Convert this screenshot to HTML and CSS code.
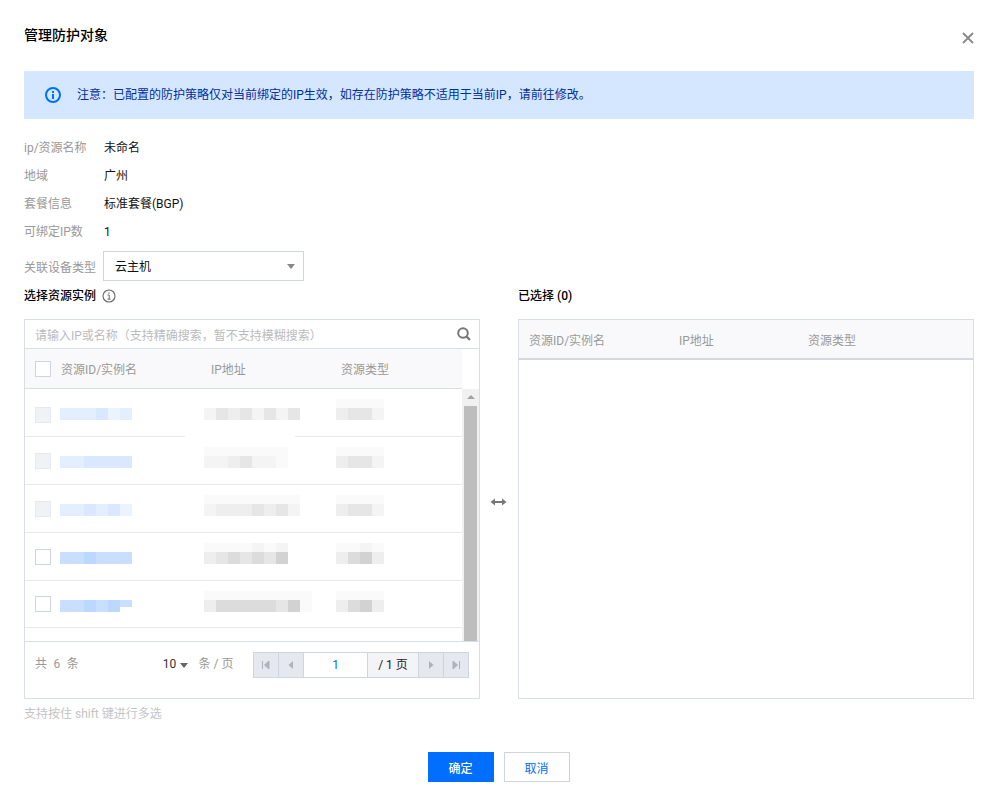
FILE: index.html
```html
<!DOCTYPE html>
<html lang="zh-CN">
<head>
<meta charset="utf-8">
<title>管理防护对象</title>
<link rel="stylesheet" href="styles.css">
</head>
<body>
<div class="dialog">
  <header class="head">
    <h1 class="title">管理防护对象</h1>
    <svg class="close" width="12" height="12" viewBox="0 0 12 12"><path d="M1 1l10 10M11 1L1 11" stroke="#888" stroke-width="1.8" fill="none"/></svg>
  </header>
  <div class="alert">
    <svg class="alert-icon" width="16" height="16" viewBox="0 0 16 16"><circle cx="8" cy="8" r="7" fill="none" stroke="#006eff" stroke-width="2"/><rect x="7" y="7" width="2" height="5" fill="#006eff"/><rect x="7" y="4" width="2" height="2" fill="#006eff"/></svg>
    <span>注意：已配置的防护策略仅对当前绑定的IP生效，如存在防护策略不适用于当前IP，请前往修改。</span>
  </div>
  <dl class="info">
    <div class="info-row"><dt>ip/资源名称</dt><dd>未命名</dd></div>
    <div class="info-row"><dt>地域</dt><dd>广州</dd></div>
    <div class="info-row"><dt>套餐信息</dt><dd>标准套餐(BGP)</dd></div>
    <div class="info-row"><dt>可绑定IP数</dt><dd>1</dd></div>
  </dl>
  <div class="select-row">
    <span class="select-label">关联设备类型</span>
    <div class="select"><span class="select-value">云主机</span><i class="caret"></i></div>
  </div>
  <div class="transfer">
    <section class="col">
      <h2 class="col-title">选择资源实例
        <svg class="tip" width="14" height="14" viewBox="0 0 14 14"><circle cx="7" cy="7" r="6" fill="none" stroke="#666" stroke-width="1.1"/><path d="M5.600 6h1.600v4M5.600 10.200h3" stroke="#666" fill="none"/><rect x="6.400" y="3.400" width="1.200" height="1.200" fill="#666"/></svg>
      </h2>
      <div class="box">
        <div class="search"><span>请输入IP或名称（支持精确搜索，暂不支持模糊搜索）</span>
          <svg class="search-icon" width="14" height="14" viewBox="0 0 14 14"><circle cx="6" cy="6" r="4.800" fill="none" stroke="#777" stroke-width="2"/><path d="M9.400 9.400l3.600 3.600" stroke="#777" stroke-width="2.200"/></svg>
        </div>
        <div class="table-head">
          <div class="thead-row"><i class="check head-check"></i><span class="th-name">资源ID/实例名</span><span class="th-ip">IP地址</span><span class="th-type">资源类型</span></div>
          <div class="thead-gap"></div>
        </div>
        <div class="table-body">
          <div class="rows">
            <div class="row"><i class="check faded"></i>
              <div class="cell"><div class="mos"><b class="b1"></b><b class="b1"></b><b class="b1"></b><b class="b2"></b><b class="b0"></b><b class="b1"></b></div></div>
              <div class="cell"><div class="mos"><b class="g1"></b><b class="g3"></b><b class="g2"></b><b class="g3"></b><b class="g1"></b><b class="g3"></b><b class="g1"></b><b class="g3"></b></div></div>
              <div class="cell"><div class="mos up"><b class="g0"></b><b class="g0"></b><b class="g0"></b><b class="g0"></b></div><div class="mos"><b class="g2"></b><b class="g3"></b><b class="g3"></b><b class="g1"></b></div></div>
            </div>
            <div class="row"><i class="check faded"></i>
              <div class="cell"><div class="mos"><b class="b1"></b><b class="b1"></b><b class="b2"></b><b class="b2"></b><b class="b2"></b><b class="b2"></b></div></div>
              <div class="cell"><div class="mos up"><b class="g0"></b><b class="g0"></b><b class="g0"></b><b class="g0"></b><b class="g0"></b><b class="g0"></b><b class="g0"></b></div><div class="mos"><b class="g1"></b><b class="g1"></b><b class="g2"></b><b class="g3"></b><b class="g1"></b><b class="g1"></b><b class="g0"></b></div></div>
              <div class="cell"><div class="mos up"><b class="g0"></b><b class="g0"></b><b class="g0"></b><b class="g0"></b></div><div class="mos"><b class="g2"></b><b class="g3"></b><b class="g3"></b><b class="g1"></b></div></div>
            </div>
            <div class="row"><i class="check faded"></i>
              <div class="cell"><div class="mos"><b class="b1"></b><b class="b1"></b><b class="b2"></b><b class="b1"></b><b class="b2"></b><b class="b0"></b></div></div>
              <div class="cell"><div class="mos up"><b class="g0"></b><b class="g0"></b><b class="g0"></b><b class="g0"></b><b class="g0"></b><b class="g0"></b><b class="g0"></b><b class="g0"></b></div><div class="mos"><b class="g1"></b><b class="g2"></b><b class="g2"></b><b class="g2"></b><b class="g3"></b><b class="g2"></b><b class="g3"></b><b class="g1"></b></div></div>
              <div class="cell"><div class="mos up"><b class="g0"></b><b class="g0"></b><b class="g0"></b><b class="g0"></b></div><div class="mos"><b class="g2"></b><b class="g3"></b><b class="g3"></b><b class="g1"></b></div></div>
            </div>
            <div class="row"><i class="check"></i>
              <div class="cell"><div class="mos"><b class="b3"></b><b class="b3"></b><b class="b4"></b><b class="b3"></b><b class="b3"></b><b class="b3"></b></div></div>
              <div class="cell"><div class="mos up"><b class="g0"></b><b class="g0"></b><b class="g0"></b><b class="g0"></b><b class="g1"></b><b class="g0"></b><b class="g1"></b></div><div class="mos"><b class="g2"></b><b class="g3"></b><b class="g4"></b><b class="g3"></b><b class="g4"></b><b class="g3"></b><b class="g5"></b></div></div>
              <div class="cell"><div class="mos up"><b class="g0"></b><b class="g0"></b><b class="g1"></b><b class="g0"></b></div><div class="mos"><b class="g2"></b><b class="g4"></b><b class="g5"></b><b class="g2"></b></div></div>
            </div>
            <div class="row"><i class="check"></i>
              <div class="cell"><div class="mos"><b class="b3"></b><b class="b3"></b><b class="b4"></b><b class="b3"></b><b class="b4"></b><b class="b3 thin"></b></div></div>
              <div class="cell"><div class="mos up"><b class="g0"></b><b class="g0"></b><b class="g0"></b><b class="g0"></b><b class="g0"></b><b class="g0"></b><b class="g0"></b><b class="g0"></b><b class="g0"></b></div><div class="mos"><b class="g2"></b><b class="g4"></b><b class="g4"></b><b class="g4"></b><b class="g4"></b><b class="g4"></b><b class="g3"></b><b class="g5"></b><b class="g0"></b></div></div>
              <div class="cell"><div class="mos up"><b class="g0"></b><b class="g0"></b><b class="g0"></b><b class="g0"></b></div><div class="mos"><b class="g2"></b><b class="g4"></b><b class="g5"></b><b class="g2"></b></div></div>
            </div>
            <div class="row"></div>
          </div>
          <div class="scrollbar"><i class="scroll-up"></i><div class="thumb"></div></div>
          <div class="smear"></div>
        </div>
        <div class="pagebar">
          <span class="total">共 6 条</span>
          <span class="size">10<i class="size-caret"></i></span>
          <span class="per">条 / 页</span>
          <div class="pager">
            <span class="pbtn"><svg width="10" height="10" viewBox="0 0 10 10"><path d="M1.500 1v8M8 1v8L3.500 5z" stroke="#aeb3bb" fill="#aeb3bb"/></svg></span>
            <span class="pbtn"><svg width="10" height="10" viewBox="0 0 10 10"><path d="M7 1v8L2.500 5z" fill="#aeb3bb"/></svg></span>
            <span class="pinput">1</span>
            <span class="ptotal">/ 1 页</span>
            <span class="pbtn"><svg width="10" height="10" viewBox="0 0 10 10"><path d="M3 1v8L7.500 5z" fill="#aeb3bb"/></svg></span>
            <span class="pbtn"><svg width="10" height="10" viewBox="0 0 10 10"><path d="M8.500 1v8M2 1v8L6.500 5z" stroke="#aeb3bb" fill="#aeb3bb"/></svg></span>
          </div>
        </div>
      </div>
    </section>
    <div class="swap">
      <svg width="17" height="8" viewBox="0 0 17 8"><path d="M0.500 4L5 0.500V7.500zM16.500 4L12 0.500V7.500z" fill="#777"/><rect x="4" y="3" width="9" height="2" fill="#777"/></svg>
    </div>
    <section class="col">
      <h2 class="col-title">已选择 (0)</h2>
      <div class="box">
        <div class="selected-head"><span class="th-name2">资源ID/实例名</span><span class="th-ip2">IP地址</span><span>资源类型</span></div>
      </div>
    </section>
  </div>
  <p class="hint">支持按住 shift 键进行多选</p>
  <footer class="actions">
    <button class="btn primary">确定</button>
    <button class="btn ghost">取消</button>
  </footer>
</div>
</body>
</html>
```

FILE: styles.css
```css
* { box-sizing: border-box; }
html, body { margin: 0; padding: 0; background: #fff; }
body {
  font-family: Roboto, "Noto Sans CJK SC", "Liberation Sans", sans-serif;
  font-size: 12px;
  color: #000;
  overflow: hidden;
}
.dialog { width: 997px; height: 803px; padding: 0 23px 0 24px; }

.head { height: 71px; display: flex; justify-content: space-between; align-items: flex-start; }
.title { margin: 26px 0 0; font-size: 14px; line-height: 18px; font-weight: 500; color: #000; }
.close { margin: 32px 0 0 0; }

.alert {
  height: 48px; background: #d5e7ff; color: #002da0;
  display: flex; align-items: center; padding-left: 21px; gap: 16px; line-height: 18px;
}
.alert-icon { flex: none; }

.info { margin: 15px 0 0; }
.info-row { display: flex; height: 28px; line-height: 28px; }
.info-row dt { width: 80px; color: #999; }
.info-row dd { margin: 0; color: #111; }

.select-row { display: flex; align-items: center; margin-top: 5px; height: 30px; }
.select-label { width: 79px; color: #999; }
.select {
  width: 201px; height: 30px; border: 1px solid #cfd5de; padding: 0 8px 0 11px;
  display: flex; align-items: center; justify-content: space-between;
}
.select-value { margin-top: -2px; color: #111; }
.caret { width: 0; height: 0; border: 4px solid transparent; border-top: 5px solid #888; border-bottom: 0; }

.transfer { display: grid; grid-template-columns: 456px 38px 456px; margin-top: 5px; }
.col-title {
  margin: 0 0 13px; height: 20px; font-size: 12px; line-height: 20px; font-weight: 500; color: #000;
  display: flex; align-items: center; gap: 6px;
}
.box { height: 380px; border: 1px solid #d9dde4; display: flex; flex-direction: column; }
.swap { display: flex; align-items: center; justify-content: center; padding-top: 19px; margin-left: -1px; }

.search { height: 29px; flex: none; display: flex; align-items: center; justify-content: space-between; padding: 0 8px 0 10px; color: #bbb; border-bottom: 1px solid #d9dde4; }
.search-icon { flex: none; }

.table-head { display: flex; height: 40px; flex: none; }
.thead-row { flex: 1; background: #f9f9fb; border-bottom: 1px solid #d9dde4; color: #999; display: grid; grid-template-columns: 36px 150px 130px 1fr; align-items: center; padding-left: 10px; position: relative; }
.thead-gap { width: 17px; }
.check { display: block; width: 16px; height: 16px; border: 1px solid #cfd5de; background: #fff; }
.head-check { position: absolute; left: 10px; top: 12px; }
.th-name { grid-column: 2; margin-left: -10px; }
.th-ip { grid-column: 3; margin-left: -10px; }
.th-type { grid-column: 4; margin-left: -10px; }

.table-body { flex: none; height: 252px; display: flex; overflow: hidden; position: relative; }
.rows { flex: 1; }
.row {
  height: 48px; border-bottom: 1px solid #e6e8ec;
  display: grid; grid-template-columns: 25px 144px 132px 1fr; padding-left: 10px;
}
.row:last-child { border-bottom: 0; }
.row:nth-child(5) { height: 47px; }
.row .check { margin-top: 16px; }
.row:first-child .check { margin-top: 18px; }
.row:nth-child(5) .check { margin-top: 15px; }
.row .faded { background: #f1f2f6; border-color: #e8e9ee; }
.cell { display: flex; flex-direction: column; justify-content: flex-end; height: 31px; }
.mos { display: flex; height: 12px; flex: none; }
.mos.up { height: 9px; }
.mos b { display: block; width: 12px; height: 100%; }
.mos b.thin { height: 60%; }
.b0 { background: #eaf3ff; }
.b1 { background: #e3eeff; }
.b2 { background: #d9e8ff; }
.b3 { background: #c9dfff; }
.b4 { background: #bdd8ff; }
.g0 { background: #fafafa; }
.g1 { background: #f4f4f4; }
.g2 { background: #eeeeee; }
.g3 { background: #e6e6e6; }
.g4 { background: #dcdcdc; }
.g5 { background: #d2d2d2; }

.scrollbar { width: 17px; flex: none; background: #f1f1f1; padding: 0 2px; }
.scroll-up { display: block; width: 0; height: 0; margin: 6px auto 7px; border: 4px solid transparent; border-bottom: 4px solid #a3a3a3; border-top: 0; }
.thumb { height: 240px; background: #bdbdbd; }
.smear { position: absolute; left: 160px; top: 44px; width: 110px; height: 6px; background: #fff; }

.pagebar { flex: 1; border-top: 1px solid #d9dde4; display: flex; align-items: flex-start; padding: 10px 10px 0; color: #999; }
.total { width: 129px; line-height: 24px; word-spacing: 3.500px; }
.size { width: 34px; color: #333; line-height: 24px; display: flex; align-items: center; gap: 4px; }
.size-caret { width: 0; height: 0; border: 4px solid transparent; border-top: 5px solid #666; border-bottom: 0; margin-top: 2px; }
.per { width: 55px; line-height: 24px; margin-left: 2px; }
.pager { display: flex; height: 26px; border: 1px solid #cfd5de; }
.pbtn { width: 25px; background: #e5e8ee; display: flex; align-items: center; justify-content: center; border-right: 1px solid #cfd5de; }
.pbtn:last-child { border-right: 0; width: 24px; }
.pinput { width: 64px; background: #fff; color: #006eff; text-align: center; line-height: 24px; border-right: 1px solid #cfd5de; }
.ptotal { width: 51px; background: #f2f4f8; color: #222; text-align: center; line-height: 24px; border-right: 1px solid #cfd5de; }

.selected-head { height: 40px; flex: none; background: #f9f9fb; border-bottom: 2px solid #d3d8e2; color: #999; display: flex; align-items: center; padding-left: 10px; }
.th-name2 { width: 150px; }
.th-ip2 { width: 129px; }

.hint { margin: 7px 0 0; line-height: 16px; color: #c4c4c4; }

.actions { display: flex; justify-content: center; gap: 10px; margin-top: 30px; padding-right: 1px; }
.btn { width: 66px; height: 30px; font: inherit; padding: 0; cursor: pointer; }
.primary { background: #006eff; border: 0; color: #fff; font-weight: 500; }
.ghost { background: #fff; border: 1px solid #cfd5de; color: #006eff; }
```
